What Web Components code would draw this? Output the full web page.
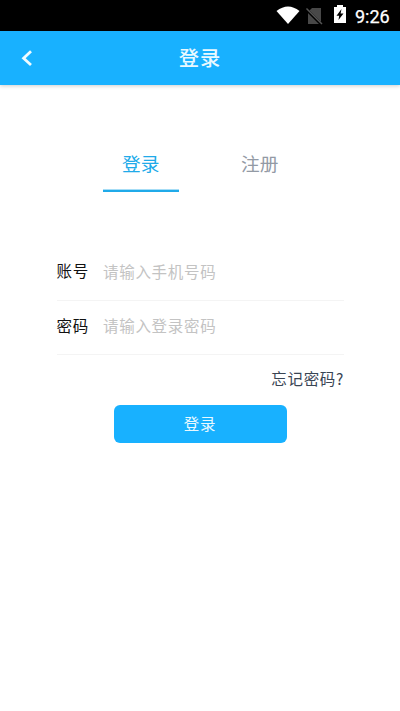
<!DOCTYPE html>
<html lang="zh-CN"><head><meta charset="utf-8"><title>登录</title>
<style>html,body{margin:0;background:#fff}body{font-family:"Noto Sans CJK SC",sans-serif}</style></head>
<body><login-page></login-page>
<script>
const define=(name,html)=>customElements.define(name,class extends HTMLElement{
  constructor(){super();this.attachShadow({mode:'open'}).innerHTML=html;}
});
define('status-bar',`<style>
:host{display:block;height:31px;background:#000;color:#fff}
svg{display:block}
.row{display:flex;height:31px;justify-content:flex-end;padding-right:10px;box-sizing:border-box}
span{font:400 18px/33px Roboto,sans-serif;width:35px;white-space:nowrap;-webkit-text-stroke:.25px #fff}
</style><div class="row"><svg width="79" height="31" viewBox="276 0 79 31">
<path d="M276.5 11Q288 2 299.5 11L288 24Z" fill="#fff"/>
<path d="M312 8H321V24H308V12Z" fill="#484848"/>
<path d="M306 9L321.5 24.5" stroke="#000" stroke-width="3"/><path d="M306.5 8.5L322 24" stroke="#555" stroke-width="1.5"/>
<path d="M334 7H337V5H343V7H346V23H334Z" fill="#fff"/>
<path d="M341.5 9L336.5 15.7H339.2L338.5 20L343.5 13.6H340.6Z" fill="#000"/>
</svg><span>9:26</span></div>`);
define('nav-bar',`<style>
:host{display:grid;grid-template-columns:54px 1fr 54px;height:53.5px;background:#18b1ff;color:#fff;box-shadow:0 1px 4px #0003;align-items:center}
svg{display:block;margin-left:19px}
h1{margin:0;text-align:center;font-size:20.3px;font-weight:500;line-height:30px;padding-bottom:2px;letter-spacing:.9px;color:#e9f9ff}
</style><svg width="14" height="18" viewBox="0 0 14 18"><path d="M12 2.3L4.6 9.2L12 16" fill="none" stroke="#effbff" stroke-width="2.8"/></svg><h1><slot></slot></h1>`);
define('tab-item',`<style>
:host{display:flex;flex-direction:column;align-items:center;width:76.5px;height:48px;color:#939aa5;font-size:18.7px;line-height:38px}
:host([active]){color:#20aae9;background:linear-gradient(#20aae966 0 1px,#20aae9 1px) bottom/100% 3px no-repeat}
</style><span><slot></slot></span>`);
define('form-row',`<style>
:host{display:flex;height:54px;box-sizing:border-box;border-bottom:1px solid #f4f4f4;font-size:15.5px;line-height:24px;letter-spacing:.7px;align-items:center;padding-bottom:5px}
.label{width:46.5px;color:#111}
:host(:first-child) .label{padding-bottom:2px}
.hint{color:#c3c3c3}
</style><span class="label"><slot name="label"></slot></span><span class="hint"><slot></slot></span>`);
define('primary-button',`<style>
:host{display:block;width:173px}
button{display:block;width:100%;height:38.5px;padding:0 0 2px;border:0;border-radius:6px;background:#18b1ff;color:#e9f9ff;font:15.5px/36px "Noto Sans CJK SC",sans-serif;letter-spacing:.7px}
</style><button><slot></slot></button>`);
define('login-page',`<style>
:host{display:block;height:711px;overflow:hidden}
.tabs{display:flex;gap:42.5px;padding:59.5px 0 0 102.5px}
form{display:block;margin:54.7px 56.5px 0}
.forgot{margin:11px -.6px 0 0;text-align:right;color:#394554;font-size:15.5px;line-height:24px;letter-spacing:.7px}
primary-button{margin:15px auto 0}
</style><status-bar></status-bar><nav-bar>登录</nav-bar>
<div class="tabs"><tab-item active>登录</tab-item><tab-item>注册</tab-item></div>
<form><form-row><span slot="label">账号</span>请输入手机号码</form-row><form-row><span slot="label">密码</span>请输入登录密码</form-row>
<p class="forgot">忘记密码?</p><primary-button>登录</primary-button></form>`);
</script></body></html>
